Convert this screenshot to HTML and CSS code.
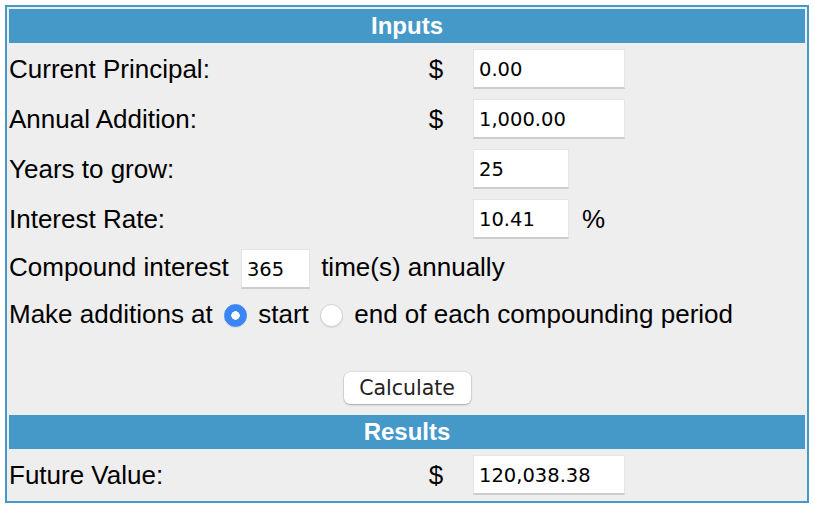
FILE: index.html
```html
<!DOCTYPE html>
<html lang="en">
<head>
    <meta charset="UTF-8">
    <meta name="viewport" content="width=device-width, initial-scale=1.0">
    <title>Compound Interest Calculator</title>
    <link rel="stylesheet" href="styles.css">
</head>
<body>
    <div class="calc">
        <div class="bar">Inputs</div>
        <div class="row">
            <span class="label">Current Principal:</span>
            <span class="unit">$</span>
            <input class="num wide" type="text" value="0.00">
        </div>
        <div class="row">
            <span class="label">Annual Addition:</span>
            <span class="unit">$</span>
            <input class="num wide" type="text" value="1,000.00">
        </div>
        <div class="row">
            <span class="label">Years to grow:</span>
            <span class="unit"></span>
            <input class="num short" type="text" value="25">
        </div>
        <div class="row">
            <span class="label">Interest Rate:</span>
            <span class="unit"></span>
            <input class="num short" type="text" value="10.41">
            <span class="percent">%</span>
        </div>
        <div class="row">
            <span class="inline">Compound interest <input class="num times" type="text" value="365"> time(s) annually</span>
        </div>
        <div class="row radios">
            <span class="inline">Make additions at <input class="radio" type="radio" name="when" checked> start <input class="radio" type="radio" name="when"> end of each compounding period</span>
        </div>
        <div class="actions">
            <button class="calc-btn">Calculate</button>
        </div>
        <div class="bar">Results</div>
        <div class="row">
            <span class="label">Future Value:</span>
            <span class="unit">$</span>
            <input class="num wide" type="text" value="120,038.38">
        </div>
    </div>
</body>
</html>
```

FILE: styles.css
```css
body {
    margin: 5px;
    background: white;
    font-family: "Liberation Sans", Arial, sans-serif;
    color: black;
}
.calc {
    display: flex;
    flex-direction: column;
    gap: 2px;
    padding: 2px;
    border: 2px solid #4599c9;
    background: #eeeeee;
}
.bar {
    height: 34px;
    line-height: 34px;
    background: #4599c9;
    color: white;
    font-weight: bold;
    font-size: 24px;
    text-align: center;
}
.row {
    display: flex;
    align-items: center;
    height: 48px;
    font-size: 26px;
}
.radios {
    height: 38px;
}
.label {
    width: 411px;
}
.unit {
    width: 32px;
    text-align: center;
}
.percent {
    margin-left: 13px;
}
.num {
    box-sizing: border-box;
    height: 40px;
    margin: 0 0 0 21px;
    padding: 2px 5px 0;
    border: 1px solid #e4e4e4;
    border-bottom: 2px solid #cdcdcd;
    background: white;
    font-family: "DejaVu Sans", sans-serif;
    font-size: 19.5px;
    color: black;
    outline: none;
}
.wide {
    width: 152px;
}
.short {
    width: 96px;
}
.inline .num {
    vertical-align: middle;
}
.times {
    width: 69px;
    margin: 0 4px 0 5px;
}
.radio {
    appearance: none;
    box-sizing: border-box;
    width: 23px;
    height: 23px;
    margin: 0 4px;
    vertical-align: middle;
    border: 1px solid #cfcfcf;
    border-radius: 50%;
    background: white;
    box-shadow: 0 1px 1px rgba(0, 0, 0, 0.08);
}
.radio:checked {
    border-color: #3a86f5;
    background: radial-gradient(circle, white 0 4px, #3a86f5 4.5px);
}
.actions {
    display: flex;
    justify-content: center;
    align-items: flex-end;
    height: 78px;
    padding-bottom: 9px;
    box-sizing: border-box;
}
.calc-btn {
    width: 127px;
    height: 32px;
    padding: 0;
    border: none;
    border-radius: 6px;
    background: white;
    box-shadow: 0 0 0 0.5px rgba(0, 0, 0, 0.12), 0 1px 2px rgba(0, 0, 0, 0.25);
    font-family: "DejaVu Sans", sans-serif;
    font-size: 20.5px;
    color: #222222;
    cursor: pointer;
}
```
